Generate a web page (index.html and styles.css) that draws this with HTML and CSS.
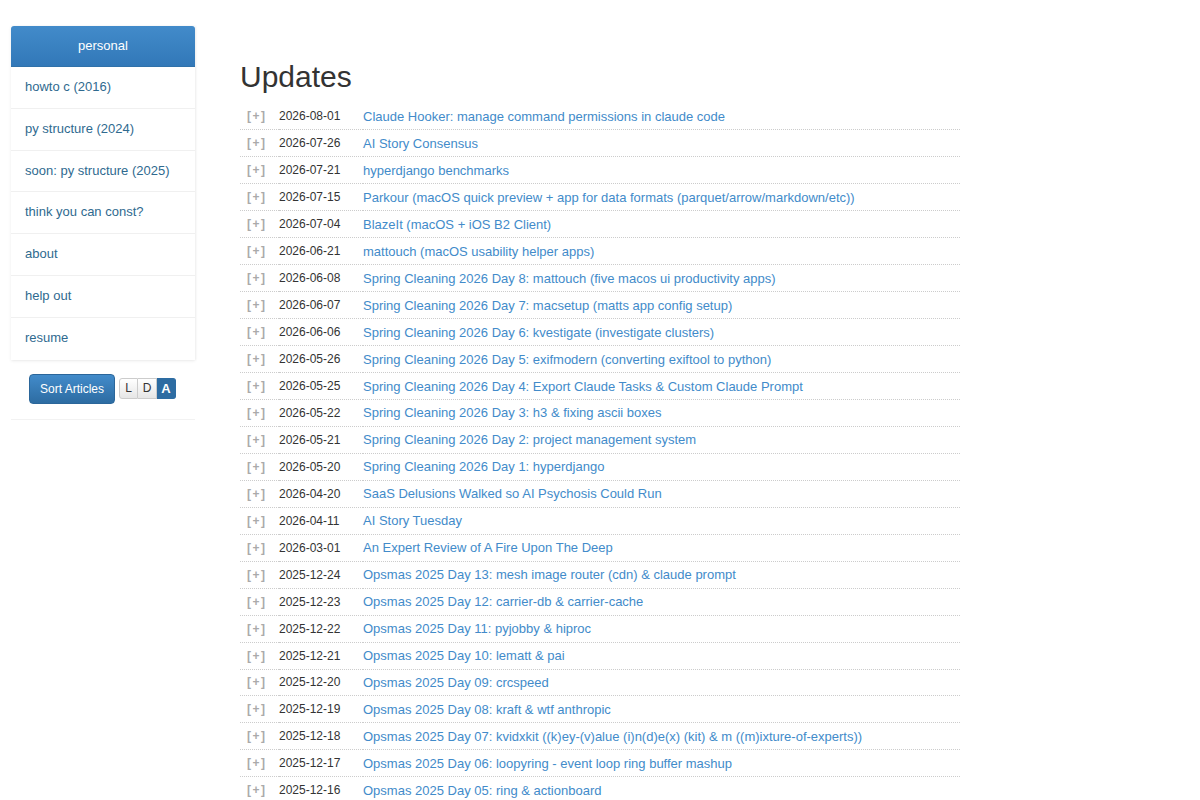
FILE: index.html
```html
<!DOCTYPE html>
<html>
<head>
<meta charset="utf-8">
<link rel="stylesheet" href="styles.css">
</head>
<body>
<div class="page">
  <aside class="sidebar">
    <div class="nav">
      <div class="nav-head">personal</div>
      <a class="nav-item" href="#">howto c (2016)</a>
      <a class="nav-item" href="#">py structure (2024)</a>
      <a class="nav-item" href="#">soon: py structure (2025)</a>
      <a class="nav-item" href="#">think you can const?</a>
      <a class="nav-item" href="#">about</a>
      <a class="nav-item" href="#">help out</a>
      <a class="nav-item" href="#">resume</a>
    </div>
    <div class="sort">
      <button class="sort-btn">Sort Articles</button>
      <div class="seg">
        <span class="seg-b">L</span><span class="seg-b">D</span><span class="seg-b on">A</span>
      </div>
    </div>
  </aside>
  <main class="main">
    <h1 class="title">Updates</h1>
    <table class="posts">
      <tr><td class="exp">[+]</td><td class="date">2026-08-01</td><td><a href="#">Claude Hooker: manage command permissions in claude code</a></td></tr>
      <tr><td class="exp">[+]</td><td class="date">2026-07-26</td><td><a href="#">AI Story Consensus</a></td></tr>
      <tr><td class="exp">[+]</td><td class="date">2026-07-21</td><td><a href="#">hyperdjango benchmarks</a></td></tr>
      <tr><td class="exp">[+]</td><td class="date">2026-07-15</td><td><a href="#">Parkour (macOS quick preview + app for data formats (parquet/arrow/markdown/etc))</a></td></tr>
      <tr><td class="exp">[+]</td><td class="date">2026-07-04</td><td><a href="#">BlazeIt (macOS + iOS B2 Client)</a></td></tr>
      <tr><td class="exp">[+]</td><td class="date">2026-06-21</td><td><a href="#">mattouch (macOS usability helper apps)</a></td></tr>
      <tr><td class="exp">[+]</td><td class="date">2026-06-08</td><td><a href="#">Spring Cleaning 2026 Day 8: mattouch (five macos ui productivity apps)</a></td></tr>
      <tr><td class="exp">[+]</td><td class="date">2026-06-07</td><td><a href="#">Spring Cleaning 2026 Day 7: macsetup (matts app config setup)</a></td></tr>
      <tr><td class="exp">[+]</td><td class="date">2026-06-06</td><td><a href="#">Spring Cleaning 2026 Day 6: kvestigate (investigate clusters)</a></td></tr>
      <tr><td class="exp">[+]</td><td class="date">2026-05-26</td><td><a href="#">Spring Cleaning 2026 Day 5: exifmodern (converting exiftool to python)</a></td></tr>
      <tr><td class="exp">[+]</td><td class="date">2026-05-25</td><td><a href="#">Spring Cleaning 2026 Day 4: Export Claude Tasks &amp; Custom Claude Prompt</a></td></tr>
      <tr><td class="exp">[+]</td><td class="date">2026-05-22</td><td><a href="#">Spring Cleaning 2026 Day 3: h3 &amp; fixing ascii boxes</a></td></tr>
      <tr><td class="exp">[+]</td><td class="date">2026-05-21</td><td><a href="#">Spring Cleaning 2026 Day 2: project management system</a></td></tr>
      <tr><td class="exp">[+]</td><td class="date">2026-05-20</td><td><a href="#">Spring Cleaning 2026 Day 1: hyperdjango</a></td></tr>
      <tr><td class="exp">[+]</td><td class="date">2026-04-20</td><td><a href="#">SaaS Delusions Walked so AI Psychosis Could Run</a></td></tr>
      <tr><td class="exp">[+]</td><td class="date">2026-04-11</td><td><a href="#">AI Story Tuesday</a></td></tr>
      <tr><td class="exp">[+]</td><td class="date">2026-03-01</td><td><a href="#">An Expert Review of A Fire Upon The Deep</a></td></tr>
      <tr><td class="exp">[+]</td><td class="date">2025-12-24</td><td><a href="#">Opsmas 2025 Day 13: mesh image router (cdn) &amp; claude prompt</a></td></tr>
      <tr><td class="exp">[+]</td><td class="date">2025-12-23</td><td><a href="#">Opsmas 2025 Day 12: carrier-db &amp; carrier-cache</a></td></tr>
      <tr><td class="exp">[+]</td><td class="date">2025-12-22</td><td><a href="#">Opsmas 2025 Day 11: pyjobby &amp; hiproc</a></td></tr>
      <tr><td class="exp">[+]</td><td class="date">2025-12-21</td><td><a href="#">Opsmas 2025 Day 10: lematt &amp; pai</a></td></tr>
      <tr><td class="exp">[+]</td><td class="date">2025-12-20</td><td><a href="#">Opsmas 2025 Day 09: crcspeed</a></td></tr>
      <tr><td class="exp">[+]</td><td class="date">2025-12-19</td><td><a href="#">Opsmas 2025 Day 08: kraft &amp; wtf anthropic</a></td></tr>
      <tr><td class="exp">[+]</td><td class="date">2025-12-18</td><td><a href="#">Opsmas 2025 Day 07: kvidxkit ((k)ey-(v)alue (i)n(d)e(x) (kit) &amp; m ((m)ixture-of-experts))</a></td></tr>
      <tr><td class="exp">[+]</td><td class="date">2025-12-17</td><td><a href="#">Opsmas 2025 Day 06: loopyring - event loop ring buffer mashup</a></td></tr>
      <tr><td class="exp">[+]</td><td class="date">2025-12-16</td><td><a href="#">Opsmas 2025 Day 05: ring &amp; actionboard</a></td></tr>
    </table>
  </main>
</div>
</body>
</html>
```

FILE: styles.css
```css
html, body {
  margin: 0;
  padding: 0;
  background: #fff;
  font-family: "Liberation Sans", Arial, sans-serif;
  font-size: 13px;
  color: #333;
}
.page {
  display: flex;
  align-items: flex-start;
  padding: 26px 0 0 11px;
}
.sidebar {
  width: 184px;
  flex: none;
}
.nav {
  display: flex;
  flex-direction: column;
  box-shadow: 0 1px 3px rgba(0,0,0,0.08), 1px 0 2px rgba(0,0,0,0.04);
}
.nav-head {
  height: 41px;
  line-height: 40px;
  text-align: center;
  color: #fff;
  background: linear-gradient(to bottom, #428bca 0%, #3278b8 100%);
  border-radius: 3px 3px 0 0;
  border-bottom: 1px solid #3071a9;
  box-sizing: border-box;
}
.nav-item {
  display: block;
  height: 41.8px;
  line-height: 40.8px;
  padding: 0 14px;
  color: #2f6a8f;
  text-decoration: none;
  border-bottom: 1px solid #f0f0f0;
  box-sizing: border-box;
}
.nav-item:last-child {
  border-bottom: none;
}
.sort {
  display: flex;
  align-items: center;
  gap: 4px;
  padding: 14px 0 15px 18px;
  border-bottom: 1px solid #f2f2f2;
}
.sort-btn {
  width: 86px;
  height: 30px;
  padding: 0;
  font-family: "Liberation Sans", Arial, sans-serif;
  font-size: 12px;
  color: #fff;
  background: linear-gradient(to bottom, #428bca 0%, #2d6ca2 100%);
  border: 1px solid #2b669a;
  border-radius: 4px;
}
.seg {
  display: flex;
  height: 21px;
}
.seg-b {
  width: 19px;
  box-sizing: border-box;
  text-align: center;
  line-height: 19px;
  font-size: 12px;
  color: #333;
  background: linear-gradient(to bottom, #fff 0%, #e6e6e6 100%);
  border: 1px solid #ccc;
  border-left: none;
}
.seg-b:first-child {
  border-left: 1px solid #ccc;
  border-radius: 3px 0 0 3px;
}
.seg-b.on {
  color: #fff;
  font-weight: bold;
  font-size: 13px;
  background: #2d6ca2;
  border-color: #2d6ca2;
  border-radius: 0 3px 3px 0;
}
.main {
  margin-left: 45px;
  width: 720px;
}
.title {
  margin: 33px 0 8px;
  font-size: 30px;
  font-weight: 500;
  line-height: 36px;
  color: #333;
}
.posts {
  width: 720px;
  border-collapse: collapse;
}
.posts td {
  height: 26.96px;
  padding: 0;
  border-bottom: 1px dotted #ccc;
  box-sizing: border-box;
  vertical-align: middle;
  white-space: nowrap;
}
.posts .exp {
  width: 39px;
  padding-left: 7px;
  color: #aaa;
  font-weight: bold;
  font-size: 12px;
  letter-spacing: 1.5px;
}
.posts .date {
  width: 84px;
  font-size: 12px;
  color: #333;
}
.posts a {
  color: #428bca;
  text-decoration: none;
}
```
